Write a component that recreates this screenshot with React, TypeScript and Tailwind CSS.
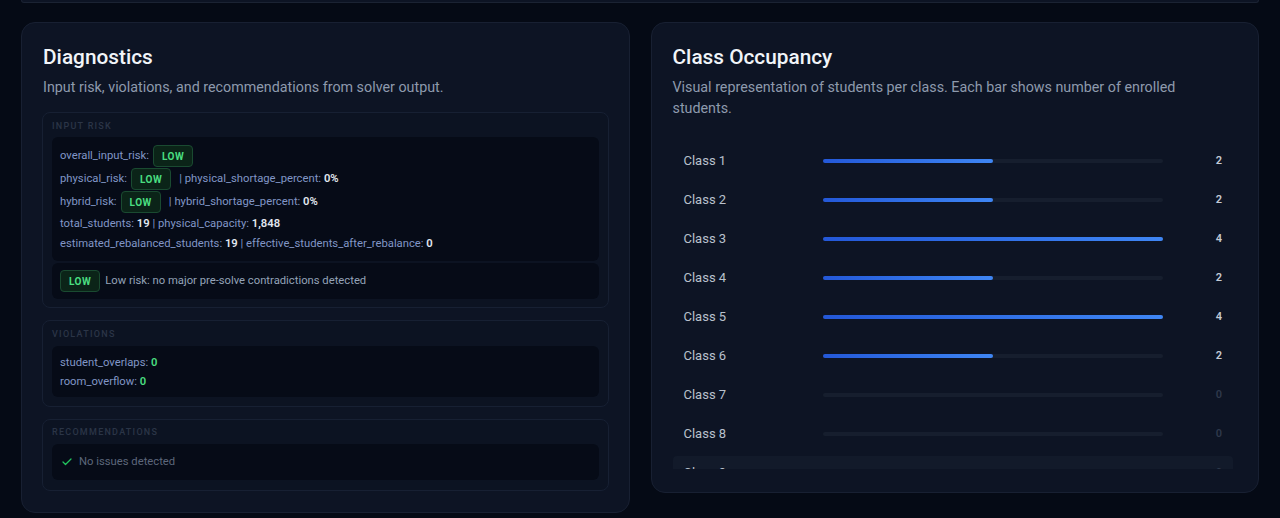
import { Check } from 'lucide-react'

type ClassRow = { name: string; count: number }

const classes: ClassRow[] = [
  { name: 'Class 1', count: 2 },
  { name: 'Class 2', count: 2 },
  { name: 'Class 3', count: 4 },
  { name: 'Class 4', count: 2 },
  { name: 'Class 5', count: 4 },
  { name: 'Class 6', count: 2 },
  { name: 'Class 7', count: 0 },
  { name: 'Class 8', count: 0 },
  { name: 'Class 9', count: 0 },
  { name: 'Class 10', count: 0 },
]

const maxCount = 4

function LowBadge() {
  return (
    <span className="inline-flex h-[22px] items-center rounded-[4px] border border-[#1a4a31] bg-[#0b2418] px-[8px] text-[10px] font-bold tracking-wider text-[#4ade80]">
      LOW
    </span>
  )
}

function SectionLabel({ children }: { children: React.ReactNode }) {
  return (
    <div className="mb-[6px] text-[9px] font-medium uppercase leading-[12px] tracking-[0.14em] text-[#2b3547]">
      {children}
    </div>
  )
}

function Key({ children }: { children: React.ReactNode }) {
  return <span className="text-[#8196c6]">{children}</span>
}

function Val({ children, green }: { children: React.ReactNode; green?: boolean }) {
  return <span className={`font-semibold ${green ? 'text-[#4ade80]' : 'text-[#e2e8f0]'}`}>{children}</span>
}

function Diagnostics() {
  return (
    <div className="rounded-[14px] border border-[#182032] bg-[#0d1424] px-[20px] pb-[21px] pt-[20px]">
      <h2 className="pl-px text-[20.8px] font-medium leading-7 text-[#f1f5f9]">Diagnostics</h2>
      <p className="mt-[6px] pl-px text-[14.3px] leading-5 text-[#8e9aad]">
        Input risk, violations, and recommendations from solver output.
      </p>

      <div className="mt-[15px] flex flex-col">
        <div className="rounded-lg border border-[#172033] bg-[#0c1322] px-[9px] pb-2 pt-[7px]">
          <div className="mb-[5px] text-[9px] font-medium uppercase leading-[12px] tracking-[0.14em] text-[#2b3547]">
            Input Risk
          </div>
          <div className="flex flex-col gap-px rounded-md bg-[#060b17] pb-[8px] pl-2 pt-2 text-[11.25px]">
            <div className="flex h-[22px] items-center">
              <Key>overall_input_risk:</Key>
              <span className="ml-1">
                <LowBadge />
              </span>
            </div>
            <div className="flex h-[22px] items-center">
              <Key>physical_risk:</Key>
              <span className="ml-1">
                <LowBadge />
              </span>
              <span className="ml-2">
                <Key>| physical_shortage_percent: </Key>
                <Val>0%</Val>
              </span>
            </div>
            <div className="flex h-[22px] items-center">
              <Key>hybrid_risk:</Key>
              <span className="ml-1">
                <LowBadge />
              </span>
              <span className="ml-2">
                <Key>| hybrid_shortage_percent: </Key>
                <Val>0%</Val>
              </span>
            </div>
            <div className="leading-[19px]">
              <Key>total_students: </Key>
              <Val>19</Val>
              <Key> | physical_capacity: </Key>
              <Val>1,848</Val>
            </div>
            <div className="leading-[19px]">
              <Key>estimated_rebalanced_students: </Key>
              <Val>19</Val>
              <Key> | effective_students_after_rebalance: </Key>
              <Val>0</Val>
            </div>
          </div>
          <div className="mt-[2px] flex items-center gap-[5px] rounded-md bg-[#060b17] py-[7px] pl-2 text-[11.25px] text-[#94a3b8]">
            <LowBadge />
            <span>Low risk: no major pre-solve contradictions detected</span>
          </div>
        </div>

        <div className="mt-3 rounded-lg border border-[#172033] bg-[#0c1322] px-[9px] pb-[9px] pt-[7px]">
          <SectionLabel>Violations</SectionLabel>
          <div className="rounded-md bg-[#060b17] pb-[6px] pl-2 pt-[7px] text-[11.25px] leading-[19px]">
            <div>
              <Key>student_overlaps: </Key>
              <Val green>0</Val>
            </div>
            <div>
              <Key>room_overflow: </Key>
              <Val green>0</Val>
            </div>
          </div>
        </div>

        <div className="mt-3 rounded-lg border border-[#172033] bg-[#0c1322] px-[9px] pb-[10px] pt-[6px]">
          <SectionLabel>Recommendations</SectionLabel>
          <div className="flex h-[36px] items-center gap-[6px] rounded-md bg-[#060b17] pl-[9px] text-[11.25px] text-[#5d677b]">
            <Check size={12} strokeWidth={2.5} className="text-[#22c55e]" />
            <span>No issues detected</span>
          </div>
        </div>
      </div>
    </div>
  )
}

function Occupancy() {
  return (
    <div className="rounded-[14px] border border-[#182032] bg-[#0d1424] px-[21px] pb-[23px] pt-[20px]">
      <h2 className="text-[20.8px] font-medium leading-7 text-[#f1f5f9]">Class Occupancy</h2>
      <p className="mt-[6px] pr-[20px] text-[14.3px] leading-[21px] text-[#8e9aad]">
        Visual representation of students per class. Each bar shows number of enrolled students.
      </p>

      <div className="mr-[4px] mt-[25px] flex h-[325px] flex-col gap-[5px] overflow-hidden">
        {classes.map((c, i) => (
          <div
            key={c.name}
            className={`flex h-[34px] shrink-0 items-center px-[11px] ${i === 8 ? 'rounded-sm bg-[#121a2a]' : ''}`}
          >
            <span className="w-[139px] shrink-0 text-[13px] text-[#b9c1cd]">{c.name}</span>
            <div className="h-[4px] flex-1 rounded-full bg-[#161e2e]">
              <div
                className="h-full rounded-full bg-gradient-to-r from-[#2458d8] to-[#3f86f4]"
                style={{ width: `${(c.count / maxCount) * 100}%` }}
              />
            </div>
            <span
              className={`w-[59px] shrink-0 text-right text-[11px] font-semibold ${
                c.count > 0 ? 'text-[#c3cad5]' : 'text-[#2f394b]'
              }`}
            >
              {c.count}
            </span>
          </div>
        ))}
      </div>
    </div>
  )
}

export default function App() {
  return (
    <div className="min-h-screen bg-[#050a15] font-['Roboto','Noto_Sans',sans-serif]">
      <div className="mx-[21px] h-[3px] rounded-b-xl border border-t-0 border-[#1b2333] bg-[#0d1424]" />
      <div className="grid grid-cols-2 items-start gap-[21px] px-[21px] pt-[19px]">
        <Diagnostics />
        <Occupancy />
      </div>
    </div>
  )
}
